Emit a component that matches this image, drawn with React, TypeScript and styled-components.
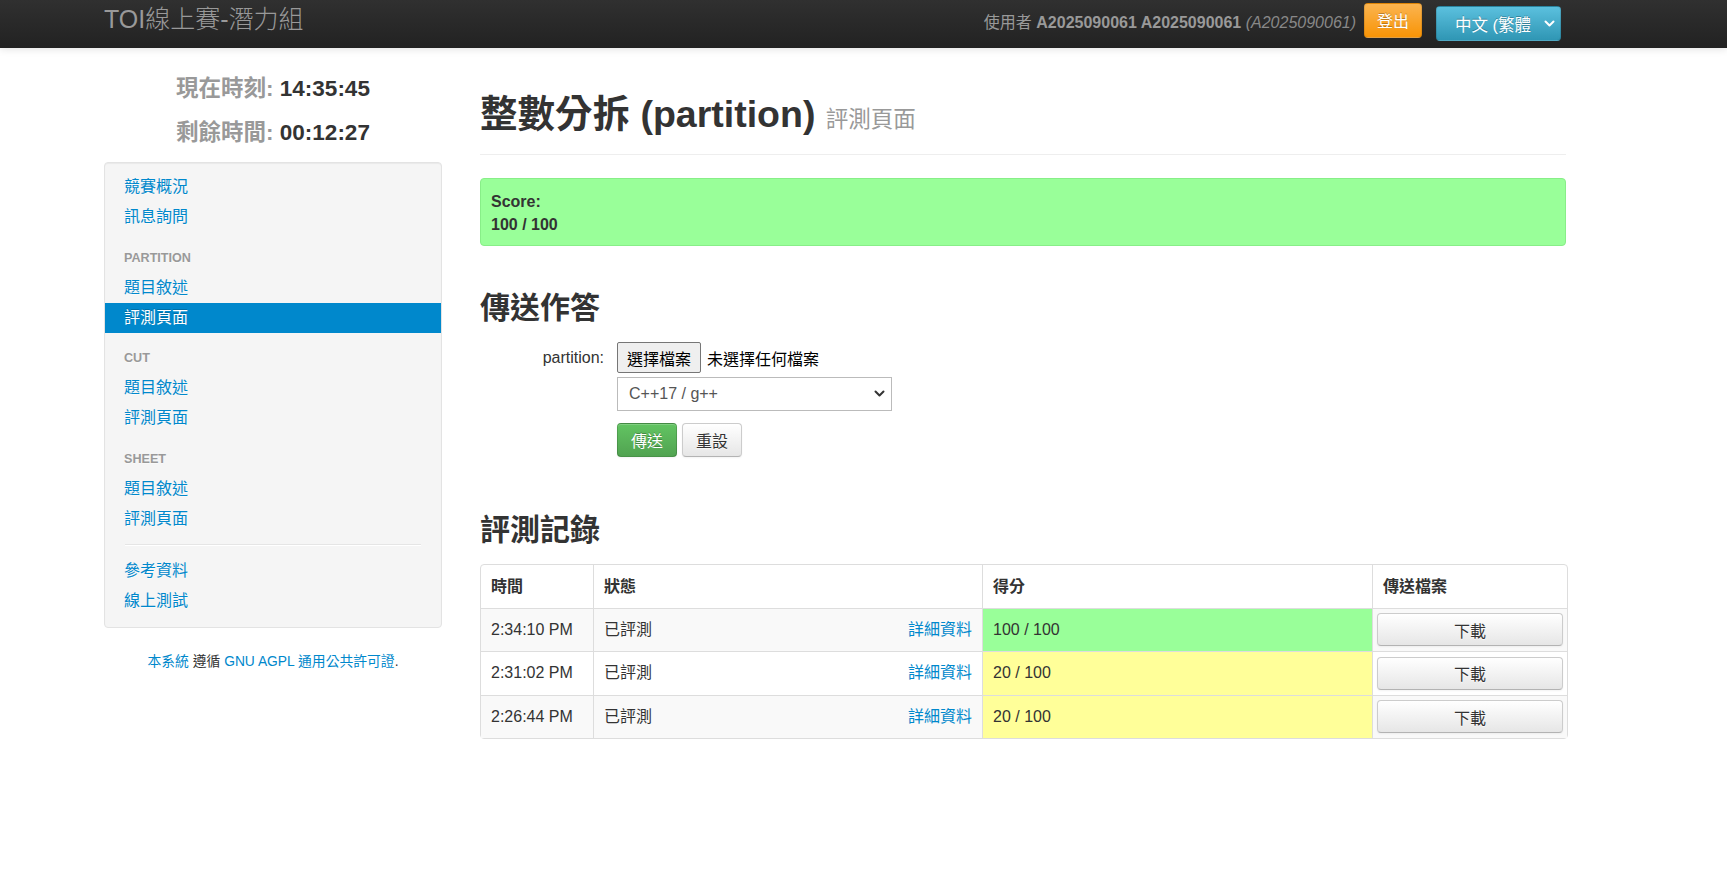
import React from 'react';
import styled, { createGlobalStyle } from 'styled-components';

const GlobalStyle = createGlobalStyle`
  html, body { margin: 0; padding: 0; background: #fff; }
  body {
    font-family: "Liberation Sans", Arial, "Noto Sans CJK TC", sans-serif;
    font-size: 16px;
    color: #333;
  }
  * { box-sizing: border-box; }
`;

const Navbar = styled.header`
  height: 48px;
  background: linear-gradient(to bottom, #303030, #222222);
  box-shadow: 0 1px 8px rgba(0, 0, 0, 0.12);
  display: flex;
  justify-content: space-between;
  align-items: flex-start;
  padding: 0 166px 0 104px;
`;

const Brand = styled.a`
  font-size: 25px;
  line-height: 39px;
  color: #999;
  font-weight: 300;
  text-decoration: none;
  white-space: nowrap;
`;

const NavRight = styled.div`
  display: flex;
  align-items: flex-start;
`;

const UserText = styled.span`
  color: #999;
  font-size: 16px;
  line-height: 45px;
  margin-right: 8px;
  white-space: nowrap;
  b { font-weight: bold; }
  i { font-style: italic; color: #888; }
`;

const LogoutButton = styled.button`
  margin-top: 3px;
  width: 58px;
  height: 34.5px;
  border: 1px solid rgba(0, 0, 0, 0.1);
  border-radius: 4px;
  background: linear-gradient(to bottom, #fbb450, #f89406);
  color: #fff;
  font-family: inherit;
  font-size: 16px;
  text-shadow: 0 -1px 0 rgba(0, 0, 0, 0.25);
  padding: 0;
`;

const LangSelect = styled.div`
  margin-left: 14px;
  margin-top: 6px;
  width: 125px;
  height: 35px;
  border: 1px solid rgba(0, 0, 0, 0.12);
  border-radius: 4px;
  background: linear-gradient(to bottom, #5bc0de, #2f96b4);
  color: #fff;
  display: flex;
  align-items: center;
  padding-left: 18px;
  font-size: 16.5px;
  text-shadow: 0 -1px 0 rgba(0, 0, 0, 0.25);
`;

const LangText = styled.span`
  width: 76px;
  white-space: nowrap;
`;

const LangChevron = styled.svg`
  margin-left: 13px;
  width: 11px;
  height: 8px;
`;

const Page = styled.div`
  display: flex;
  align-items: flex-start;
  padding-left: 104px;
`;

const Sidebar = styled.aside`
  width: 338px;
  flex: none;
  padding-top: 19px;
`;

const ClockLine = styled.div`
  text-align: center;
  font-size: 22.5px;
  font-weight: bold;
  line-height: 44px;
  color: #333;
`;

const ClockLabel = styled.span`
  color: #999;
`;

const Well = styled.nav`
  margin-top: 7px;
  background: #f5f5f5;
  border: 1px solid #e3e3e3;
  border-radius: 4px;
  box-shadow: inset 0 1px 1px rgba(0, 0, 0, 0.05);
  padding: 9px 0 11px;
`;

const NavLink = styled.a<{ $active?: boolean }>`
  display: block;
  padding: 4px 19px;
  line-height: 22px;
  font-size: 16px;
  text-decoration: none;
  color: ${(p) => (p.$active ? '#fff' : '#0088cc')};
  background: ${(p) => (p.$active ? '#0088cc' : 'transparent')};
  text-shadow: ${(p) => (p.$active ? '0 -1px 0 rgba(0,0,0,0.2)' : '0 1px 0 rgba(255,255,255,0.5)')};
`;

const NavHeader = styled.div`
  margin-top: 10.5px;
  padding: 4px 19px;
  line-height: 22px;
  font-size: 12.6px;
  font-weight: bold;
  text-transform: uppercase;
  color: #999;
  text-shadow: 0 1px 0 rgba(255, 255, 255, 0.5);
`;

const Divider = styled.div`
  margin: 10px 20px;
  height: 2px;
  background: #e5e5e5;
  border-bottom: 1px solid #fff;
`;

const Footer = styled.p`
  margin: 24px 0 0;
  text-align: center;
  font-size: 13.8px;
  line-height: 20px;
  color: #333;
  a { color: #0088cc; text-decoration: none; }
`;

const Main = styled.main`
  margin-left: 38px;
  width: 1086px;
  flex: none;
`;

const PageHeader = styled.div`
  margin-top: 44px;
  padding-bottom: 12px;
  border-bottom: 1px solid #eee;
`;

const Title = styled.h1`
  margin: 0;
  font-size: 37.5px;
  line-height: 44px;
  font-weight: bold;
  color: #333;
  white-space: nowrap;
`;

const Subtitle = styled.small`
  font-size: 22.5px;
  font-weight: normal;
  color: #999;
`;

const Alert = styled.div`
  margin-top: 22.5px;
  background: #99ff99;
  border: 1px solid #88ee88;
  border-radius: 4px;
  padding: 11px 10px 9px;
  font-weight: bold;
  line-height: 23px;
  font-size: 16px;
  color: #333;
`;

const SectionTitle = styled.h2<{ $gap: number }>`
  margin: ${(p) => p.$gap}px 0 0;
  font-size: 30px;
  line-height: 40px;
  font-weight: bold;
  color: #333;
`;

const Form = styled.form`
  margin-top: 14px;
  display: grid;
  grid-template-columns: 124px 1fr;
  column-gap: 13px;
  align-items: center;
`;

const FieldLabel = styled.label`
  text-align: right;
  font-size: 16px;
  color: #333;
`;

const FileRow = styled.div`
  display: flex;
  align-items: center;
  height: 31px;
`;

const FileButton = styled.button`
  height: 31px;
  width: 84px;
  padding: 0;
  background: #efefef;
  border: 1px solid #767676;
  border-radius: 2px;
  font-family: inherit;
  font-size: 16px;
  color: #000;
`;

const FileName = styled.span`
  margin-left: 6px;
  font-size: 16px;
  color: #000;
`;

const Controls = styled.div`
  grid-column: 2;
`;

const SelectBox = styled.div`
  position: relative;
  margin-top: 3.5px;
  width: 275px;
  height: 34px;
  border: 1px solid #bbb;
  background: #fff;
  display: flex;
  align-items: center;
  padding-left: 11px;
  font-size: 16px;
  color: #555;
`;

const SelectChevron = styled.svg`
  position: absolute;
  right: 6px;
  top: 12px;
  width: 11px;
  height: 8px;
`;

const ButtonRow = styled.div`
  margin-top: 12px;
  display: flex;
  gap: 5px;
`;

const Btn = styled.button<{ $variant?: 'success' | 'default' }>`
  height: 34.5px;
  padding: 0 13px;
  border-radius: 4px;
  font-family: inherit;
  font-size: 16px;
  border: 1px solid ${(p) => (p.$variant === 'success' ? 'rgba(0,0,0,0.15)' : '#ccc')};
  border-bottom-color: ${(p) => (p.$variant === 'success' ? 'rgba(0,0,0,0.25)' : '#b3b3b3')};
  color: ${(p) => (p.$variant === 'success' ? '#fff' : '#333')};
  background: ${(p) =>
    p.$variant === 'success'
      ? 'linear-gradient(to bottom, #62c462, #51a351)'
      : 'linear-gradient(to bottom, #ffffff, #e6e6e6)'};
  text-shadow: ${(p) =>
    p.$variant === 'success' ? '0 -1px 0 rgba(0,0,0,0.25)' : '0 1px 1px rgba(255,255,255,0.75)'};
  box-shadow: inset 0 1px 0 rgba(255, 255, 255, 0.2), 0 1px 2px rgba(0, 0, 0, 0.05);
`;

const Table = styled.table`
  margin-top: 14px;
  width: 1086px;
  table-layout: fixed;
  border-collapse: separate;
  border-spacing: 0;
  border: 1px solid #ddd;
  border-radius: 4px;
  font-size: 16px;
  color: #333;
`;

const Th = styled.th`
  text-align: left;
  font-weight: bold;
  padding: 10px 10px;
  line-height: 23px;
  border-left: 1px solid #ddd;
  &:first-child { border-left: none; }
`;

const Tr = styled.tr<{ $striped?: boolean }>`
  background: ${(p) => (p.$striped ? '#f9f9f9' : '#fff')};
`;

const Td = styled.td<{ $score?: 'full' | 'partial'; $tight?: boolean }>`
  padding: ${(p) => (p.$tight ? '4px' : '10px')};
  line-height: 22.5px;
  border-top: 1px solid #ddd;
  border-left: 1px solid #ddd;
  vertical-align: middle;
  background: ${(p) => (p.$score === 'full' ? '#99ff99' : p.$score === 'partial' ? '#ffff99' : 'transparent')};
  &:first-child { border-left: none; }
`;

const StatusCell = styled.div`
  display: flex;
  justify-content: space-between;
  a { color: #0088cc; text-decoration: none; }
`;

const DownloadButton = styled(Btn)`
  width: 100%;
  height: 33px;
  display: block;
`;

const Chevron = ({ color }: { color: string }) => (
  <path d="M1.5 1.5 L5.5 5.5 L9.5 1.5" fill="none" stroke={color} strokeWidth="2" strokeLinecap="round" strokeLinejoin="round" />
);

const rows = [
  { time: '2:34:10 PM', score: '100 / 100', full: true },
  { time: '2:31:02 PM', score: '20 / 100', full: false },
  { time: '2:26:44 PM', score: '20 / 100', full: false },
];

export default function App() {
  return (
    <>
      <GlobalStyle />
      <Navbar>
        <Brand href="#">TOI線上賽-潛力組</Brand>
        <NavRight>
          <UserText>
            使用者 <b>A2025090061 A2025090061</b> <i>(A2025090061)</i>
          </UserText>
          <LogoutButton>登出</LogoutButton>
          <LangSelect>
            <LangText>中文 (繁體</LangText>
            <LangChevron viewBox="0 0 11 8">
              <Chevron color="#fff" />
            </LangChevron>
          </LangSelect>
        </NavRight>
      </Navbar>
      <Page>
        <Sidebar>
          <ClockLine>
            <ClockLabel>現在時刻:</ClockLabel> 14:35:45
          </ClockLine>
          <ClockLine>
            <ClockLabel>剩餘時間:</ClockLabel> 00:12:27
          </ClockLine>
          <Well>
            <NavLink href="#">競賽概況</NavLink>
            <NavLink href="#">訊息詢問</NavLink>
            <NavHeader>partition</NavHeader>
            <NavLink href="#">題目敘述</NavLink>
            <NavLink href="#" $active>評測頁面</NavLink>
            <NavHeader>cut</NavHeader>
            <NavLink href="#">題目敘述</NavLink>
            <NavLink href="#">評測頁面</NavLink>
            <NavHeader>sheet</NavHeader>
            <NavLink href="#">題目敘述</NavLink>
            <NavLink href="#">評測頁面</NavLink>
            <Divider />
            <NavLink href="#">參考資料</NavLink>
            <NavLink href="#">線上測試</NavLink>
          </Well>
          <Footer>
            <a href="#">本系統</a> 遵循 <a href="#">GNU AGPL 通用公共許可證</a>.
          </Footer>
        </Sidebar>
        <Main>
          <PageHeader>
            <Title>
              整數分拆 (partition) <Subtitle>評測頁面</Subtitle>
            </Title>
          </PageHeader>
          <Alert>
            Score:
            <br />
            100 / 100
          </Alert>
          <SectionTitle $gap={42.5}>傳送作答</SectionTitle>
          <Form>
            <FieldLabel>partition:</FieldLabel>
            <FileRow>
              <FileButton type="button">選擇檔案</FileButton>
              <FileName>未選擇任何檔案</FileName>
            </FileRow>
            <Controls>
              <SelectBox>
                C++17 / g++
                <SelectChevron viewBox="0 0 11 8">
                  <Chevron color="#333" />
                </SelectChevron>
              </SelectBox>
              <ButtonRow>
                <Btn type="button" $variant="success">傳送</Btn>
                <Btn type="button">重設</Btn>
              </ButtonRow>
            </Controls>
          </Form>
          <SectionTitle $gap={52.5}>評測記錄</SectionTitle>
          <Table>
            <colgroup>
              <col style={{ width: 112 }} />
              <col style={{ width: 389 }} />
              <col style={{ width: 390 }} />
              <col style={{ width: 195 }} />
            </colgroup>
            <thead>
              <tr>
                <Th>時間</Th>
                <Th>狀態</Th>
                <Th>得分</Th>
                <Th>傳送檔案</Th>
              </tr>
            </thead>
            <tbody>
              {rows.map((r, i) => (
                <Tr key={r.time} $striped={i % 2 === 0}>
                  <Td>{r.time}</Td>
                  <Td>
                    <StatusCell>
                      <span>已評測</span>
                      <a href="#">詳細資料</a>
                    </StatusCell>
                  </Td>
                  <Td $score={r.full ? 'full' : 'partial'}>{r.score}</Td>
                  <Td $tight>
                    <DownloadButton type="button">下載</DownloadButton>
                  </Td>
                </Tr>
              ))}
            </tbody>
          </Table>
        </Main>
      </Page>
    </>
  );
}
